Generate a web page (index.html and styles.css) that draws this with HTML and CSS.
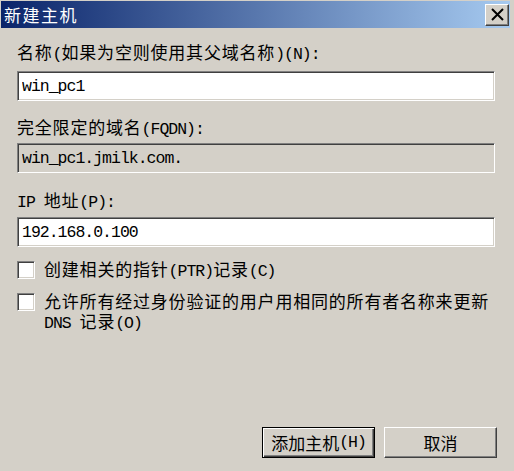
FILE: index.html
```html
<!DOCTYPE html>
<html lang="zh-CN">
<head>
  <meta charset="UTF-8" />
  <title>新建主机</title>
  <link rel="stylesheet" href="styles.css">
</head>
<body>
  <div class="window">
    <div class="titlebar">
      <span class="title">新建主机</span>
      <button class="close" title="关闭">
        <svg width="13" height="13" viewBox="0 0 13 13"><path d="M1 1L12 12M12 1L1 12" stroke="#000" stroke-width="2" fill="none"/></svg>
      </button>
    </div>

    <div class="content">
      <label class="label l-name" for="name">名称<span class="en">(</span>如果为空则使用其父域名称<span class="en">)(N):</span></label>
      <input id="name" class="field f-name" type="text" value="win_pc1">

      <label class="label l-fqdn">完全限定的域名<span class="en">(FQDN):</span></label>
      <input class="field f-fqdn readonly" type="text" value="win_pc1.jmilk.com." readonly>

      <label class="label l-ip" for="ip"><span class="en">IP </span>地址<span class="en">(P):</span></label>
      <input id="ip" class="field f-ip" type="text" value="192.168.0.100">

      <div class="check c-ptr">
        <span class="box"></span>
        <span class="check-text">创建相关的指针<span class="en">(PTR)</span>记录<span class="en">(C)</span></span>
      </div>
      <div class="check c-dns">
        <span class="box"></span>
        <span class="check-text">允许所有经过身份验证的用户用相同的所有者名称来更新<span class="en">DNS </span>记录<span class="en">(O)</span></span>
      </div>

      <div class="actions">
        <button class="button default">添加主机<span class="en">(H)</span></button>
        <button class="button">取消</button>
      </div>
    </div>
  </div>
</body>
</html>
```

FILE: styles.css
```css
:root {
  --face: #d4d0c8;
  --shadow: #808080;
  --dark: #404040;
  --light: #fff;
}
* { box-sizing:border-box; margin:0; padding:0 }
html, body { height:100%; background:var(--face) }
body {
  font-family:"Noto Sans CJK SC", sans-serif; font-size:17px;
  letter-spacing:0.8px; color:#000; overflow:hidden;
}
/* half-width latin: 8.9px per char, like the CJK cell / 2 */
.en { font-family:"Liberation Mono", monospace; font-size:16.5px; letter-spacing:-1px }

.window { height:100%; display:flex; flex-direction:column }

.titlebar {
  height:27px; margin:1px 4px 0 1px; padding:0 1px 0 3px;
  display:flex; align-items:center; justify-content:space-between;
  background:linear-gradient(to right, #0a246a, #a6caf0); color:#fff;
}
.title { line-height:20px; letter-spacing:1.5px }
.close {
  width:24px; height:22px; display:flex; align-items:center; justify-content:center;
  background:var(--face); border:1px solid; border-color:var(--light) var(--dark) var(--dark) var(--light);
  box-shadow:inset -1px -1px var(--shadow);
}

.content { flex:1; display:flex; flex-direction:column; padding:0 19px 13px 17px }

.label { display:block; line-height:20px }
.l-name { margin-top:14px }
.l-fqdn { margin-top:16px }
.l-ip { margin-top:17px }

.field {
  display:block; width:100%; height:30px; padding:0 4px;
  font-family:"Liberation Mono", monospace; font-size:16.5px; letter-spacing:-1px; color:#000;
  background:#fff; outline:none;
  border:1px solid; border-color:var(--shadow) var(--light) var(--light) var(--shadow);
  box-shadow:inset 1px 1px var(--dark), inset -1px -1px var(--face);
}
.field.readonly { background:var(--face) }
.f-name { margin-top:6px }
.f-fqdn { margin-top:3px }
.f-ip { margin-top:4px }

.check { display:flex; align-items:flex-start; gap:9px; line-height:18px }
.c-ptr { margin-top:13px }
.c-dns { margin-top:10px; line-height:20px }
.c-dns .box { margin-top:2px }
.box {
  flex:none; width:18px; height:18px; margin-top:1px; background:#fff;
  border:1px solid; border-color:var(--shadow) var(--light) var(--light) var(--shadow);
  box-shadow:inset 1px 1px var(--dark), inset -1px -1px var(--face);
}

.actions { margin-top:auto; margin-right:-2px; display:flex; justify-content:flex-end; gap:9px }
.button {
  width:113px; height:31px; display:flex; align-items:center; justify-content:center;
  font:inherit; color:#000; background:var(--face);
  border:1px solid; border-color:var(--light) var(--dark) var(--dark) var(--light);
  box-shadow:inset -1px -1px var(--shadow);
}
.button.default {
  border:1px solid #000;
  box-shadow:inset 1px 1px var(--light), inset -1px -1px var(--dark), inset -2px -2px var(--shadow);
}
```
